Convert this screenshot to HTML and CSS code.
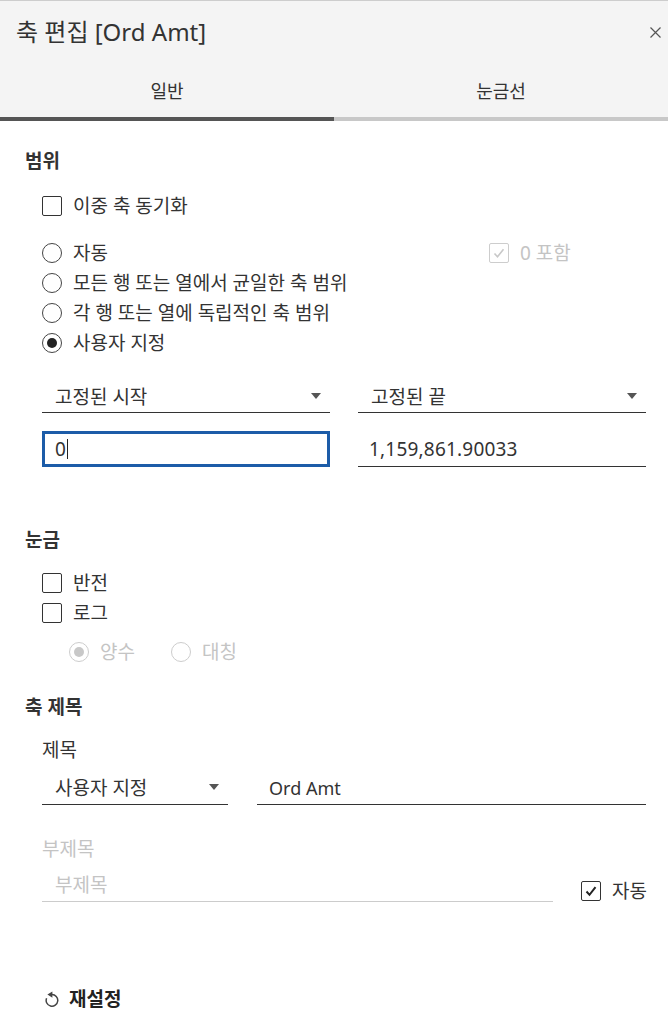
FILE: index.html
```html
<!DOCTYPE html>
<html lang="ko">
<head>
<meta charset="utf-8">
<title>축 편집</title>
<link rel="stylesheet" href="styles.css">
</head>
<body>
<div class="dialog">
  <header class="header">
    <div class="title-row">
      <h1 class="title">축 편집 [Ord Amt]</h1>
      <span class="close">
        <svg width="11" height="11" viewBox="0 0 11 11"><path d="M0.5 0.5 L10.5 10.5 M10.5 0.5 L0.5 10.5" stroke="#555" stroke-width="1.2" fill="none"/></svg>
      </span>
    </div>
    <div class="tabs">
      <div class="tab active">일반</div>
      <div class="tab">눈금선</div>
    </div>
  </header>

  <main class="content">
    <section class="section">
      <h2 class="section-title">범위</h2>
      <label class="row indent sync"><span class="box"></span><span class="lbl">이중 축 동기화</span></label>

      <div class="radio-group indent">
        <div class="row">
          <label class="radio-item auto"><span class="circle"></span><span class="lbl">자동</span></label>
          <label class="check-item disabled">
            <span class="box">
              <svg width="16" height="16" viewBox="0 0 16 16"><path d="M3.5 8.5 L6.5 11.8 L12.5 4.2" stroke="#c8c8c8" stroke-width="1.6" fill="none"/></svg>
            </span>
            <span class="lbl">0 포함</span>
          </label>
        </div>
        <label class="row"><span class="circle"></span><span class="lbl">모든 행 또는 열에서 균일한 축 범위</span></label>
        <label class="row"><span class="circle"></span><span class="lbl">각 행 또는 열에 독립적인 축 범위</span></label>
        <label class="row"><span class="circle selected"></span><span class="lbl">사용자 지정</span></label>
      </div>

      <div class="range-grid indent">
        <div class="select">고정된 시작<span class="arrow"></span></div>
        <div class="select">고정된 끝<span class="arrow"></span></div>
        <div class="input focused">0<span class="caret"></span></div>
        <div class="input number">1,159,861.90033</div>
      </div>
    </section>

    <section class="section ticks">
      <h2 class="section-title">눈금</h2>
      <div class="tick-group indent">
        <label class="row"><span class="box"></span><span class="lbl">반전</span></label>
        <label class="row"><span class="box"></span><span class="lbl">로그</span></label>
      </div>
      <div class="row log-options">
        <label class="radio-item disabled positive"><span class="circle selected"></span><span class="lbl">양수</span></label>
        <label class="radio-item disabled"><span class="circle"></span><span class="lbl">대칭</span></label>
      </div>
    </section>

    <section class="section axis-title">
      <h2 class="section-title">축 제목</h2>
      <div class="field-label indent">제목</div>
      <div class="title-grid indent">
        <div class="select">사용자 지정<span class="arrow"></span></div>
        <div class="input latin">Ord Amt</div>
      </div>
      <div class="field-label muted indent subtitle-label">부제목</div>
      <div class="subtitle-row indent">
        <div class="input placeholder">부제목</div>
        <label class="check-item auto-check">
          <span class="box">
            <svg width="16" height="16" viewBox="0 0 16 16"><path d="M3.5 8.5 L6.5 11.8 L12.5 4.2" stroke="#222" stroke-width="2" fill="none"/></svg>
          </span>
          <span class="lbl">자동</span>
        </label>
      </div>
    </section>

    <div class="reset">
      <svg class="reset-icon" width="15" height="17" viewBox="0 0 15 17">
        <path d="M6.8 4.6 A5.8 5.8 0 1 1 1.6 8.2" stroke="#444" stroke-width="1.5" fill="none"/>
        <path d="M2.4 4.6 L7.4 1.4 L7.4 7.8 Z" fill="#444"/>
      </svg>
      <span class="reset-label">재설정</span>
    </div>
  </main>
</div>
</body>
</html>
```

FILE: styles.css
```css
* { box-sizing: border-box; }

body {
  margin: 0;
  background: #fff;
  color: #333;
  font-family: "Noto Sans", "Noto Sans CJK KR", sans-serif;
  font-size: 19px;
}

.header {
  background: #f4f4f4;
  border-top: 1px solid #cdcdcd;
}

.title-row {
  height: 62px;
  display: flex;
  align-items: center;
  justify-content: space-between;
  padding: 0 7px 0 16px;
}

.title {
  margin: 0;
  font-size: 24px;
  font-weight: 400;
  line-height: 1;
  color: #333;
}

.close { display: flex; }

.tabs {
  display: flex;
}

.tab {
  flex: 1;
  height: 58px;
  display: flex;
  align-items: center;
  justify-content: center;
  font-size: 18px;
  border-bottom: 4px solid #c8c8c8;
  color: #333;
}

.tab.active { border-bottom-color: #555; }

.content {
  padding: 28px 22px 40px 25px;
}

.section-title {
  margin: 0;
  font-size: 19px;
  font-weight: 700;
  line-height: 24px;
  color: #333;
}

.indent { margin-left: 17px; }

.row {
  display: flex;
  align-items: center;
  height: 30px;
}

.lbl { line-height: 24px; white-space: nowrap; }

.box {
  width: 20px;
  height: 20px;
  border: 1.5px solid #333;
  border-radius: 2px;
  display: flex;
  align-items: center;
  justify-content: center;
  margin-right: 11px;
  flex: none;
}

.circle {
  width: 20px;
  height: 20px;
  border: 1px solid #444;
  border-radius: 50%;
  display: flex;
  align-items: center;
  justify-content: center;
  margin-right: 11px;
  flex: none;
}

.circle.selected::after {
  content: "";
  width: 10px;
  height: 10px;
  border-radius: 50%;
  background: #222;
}

.sync { margin-top: 18px; }

.radio-group { margin-top: 17px; }

.radio-item, .check-item {
  display: flex;
  align-items: center;
}

.radio-item.auto { width: 447px; }

.disabled { color: #c4c4c4; }
.disabled .box, .disabled .circle { border-color: #cdcdcd; }
.disabled .circle.selected::after { background: #c8c8c8; }

.range-grid {
  margin-top: 22px;
  display: grid;
  grid-template-columns: 288px 288px;
  column-gap: 28px;
  row-gap: 18px;
}

.select {
  height: 33px;
  border-bottom: 1px solid #333;
  display: flex;
  align-items: center;
  justify-content: space-between;
  padding: 0 9px 0 13px;
}

.arrow {
  width: 0;
  height: 0;
  border-left: 5.5px solid transparent;
  border-right: 5.5px solid transparent;
  border-top: 6px solid #555;
}

.input {
  height: 36px;
  border-bottom: 1px solid #333;
  display: flex;
  align-items: center;
  padding: 0 12px 0 11px;
}

.input.focused {
  border: 3px solid #1c5ca8;
  padding-left: 10px;
}

.input.number { letter-spacing: 0.2px; }

.input.latin { font-size: 18px; }

.caret {
  display: inline-block;
  width: 1px;
  height: 20px;
  background: #222;
  margin-left: 1px;
}

.ticks { margin-top: 61px; }

.tick-group { margin-top: 16px; }

.log-options {
  margin-top: 9px;
  padding-left: 44px;
}

.radio-item.positive { width: 102px; }

.axis-title { margin-top: 28px; }

.field-label {
  margin-top: 19px;
  line-height: 24px;
}

.field-label.muted { color: #c4c4c4; }

.title-grid {
  margin-top: 8px;
  display: grid;
  grid-template-columns: 186px 389px;
  column-gap: 29px;
}

.title-grid .select {
  height: 35px;
  padding-left: 13px;
}

.title-grid .input {
  height: 35px;
  padding-left: 12px;
  padding-top: 2px;
}

.subtitle-label { margin-top: 32px; }

.subtitle-row {
  margin-top: 5px;
  display: flex;
  align-items: flex-end;
}

.input.placeholder {
  width: 511px;
  flex: none;
  border-bottom-color: #ccc;
  color: #c4c4c4;
  padding-left: 13px;
}

.auto-check {
  flex: none;
  margin-left: 28px;
  margin-bottom: -1px;
}

.reset {
  margin-top: 84px;
  display: flex;
  align-items: center;
  height: 24px;
  padding-left: 20px;
}

.reset-icon { margin-right: 9px; }

.reset-label {
  font-weight: 700;
  font-size: 19px;
  color: #222;
}
```
